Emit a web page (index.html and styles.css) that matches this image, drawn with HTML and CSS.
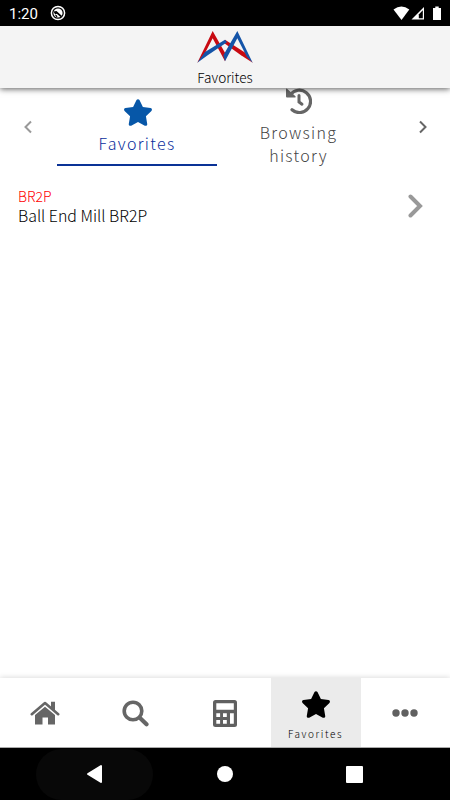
FILE: index.html
```html
<!DOCTYPE html>
<html lang="en">
<head>
<meta charset="utf-8">
<title>Favorites</title>
<link rel="stylesheet" href="styles.css">
</head>
<body>
<div class="status">
  <span class="time">1:20</span>
  <svg class="app-icon" viewBox="0 0 16 16"><circle cx="8" cy="8" r="6.6" fill="none" stroke="#fff" stroke-width="1.5"/><circle cx="8" cy="8" r="4.6" fill="#fff"/><path d="M3.500 6.500l3-.5 5.500 5-1.200 1.200-4-3.400-1.600.8z" fill="#000"/><path d="M4.800 10.500l1.700-.6 1 1.600-.8.800z" fill="#000"/></svg>
  <svg class="signals" viewBox="0 0 50 16"><path d="M.5 3.400Q8.500-2.400 16.300 3.400L8.500 14z" fill="#fff"/><path d="M31 1v12.500H18.500z" fill="#fff"/><path d="M29.800 4.200v8h-4V8.500z" fill="#000"/><path d="M40 2h2.300V.500h3.400V2H48v12h-8z" fill="#fff"/></svg>
</div>
<header class="header">
  <svg class="logo" viewBox="10 9 168 96">
    <path fill="#c80a12" d="M11 104L57 9l42 74-5 17L57 31 28 87z"/>
    <path fill="#c80a12" d="M94 35l61 39 22 30-35-22-50-36z"/>
    <path fill="#1454a8" d="M11 104l23-32 60-37 6 8-58 39z"/>
    <path fill="#1454a8" d="M94 100l-5-18 42-73 46 95-17-17-29-56z"/>
  </svg>
  <h1 class="title">Favorites</h1>
</header>
<nav class="tabs">
  <svg class="arrow dim" viewBox="0 0 10 14"><path d="M8 1.500L2.500 7 8 12.500"/></svg>
  <div class="tab active">
    <svg class="star" viewBox="0 0 576 512"><path d="M259.300 17.800L194 150.200 47.900 171.500c-26.200 3.800-36.700 36.100-17.700 54.600l105.700 103-25 145.500c-4.500 26.300 23.200 46 46.400 33.700L288 439.600l130.700 68.700c23.200 12.200 50.900-7.400 46.400-33.700l-25-145.500 105.700-103c19-18.500 8.500-50.800-17.700-54.600L382 150.200 316.700 17.800c-11.700-23.600-45.600-23.900-57.400 0z"/></svg>
    <span>Favorites</span>
  </div>
  <div class="tab">
    <svg class="history" viewBox="0 0 26 26"><path d="M4.500 6.500A11.200 11.200 0 1 1 6 21.800" fill="none" stroke="#666" stroke-width="3.200" stroke-linecap="round"/><path d="M0 1.200Q0 0 1 .700L9.500 8.200Q10 9.400 9 9.500H1Q0 9.500 0 8.500z" fill="#666"/><path d="M13 7.500v6.400l3 2.300" fill="none" stroke="#666" stroke-width="3" stroke-linecap="round"/></svg>
    <span>Browsing<br>history</span>
  </div>
  <svg class="arrow" viewBox="0 0 10 14"><path d="M2 1.500L7.500 7 2 12.500"/></svg>
</nav>
<main class="list">
  <div class="item">
    <div><div class="code">BR2P</div><div class="name">Ball End Mill BR2P</div></div>
    <svg class="go" viewBox="0 0 15 24"><path d="M2.500 2.500L12 12l-9.500 9.500"/></svg>
  </div>
</main>
<nav class="bottom">
  <div class="cell"><svg class="home" viewBox="0 0 30 24"><path d="M1.800 13.200L15 2l13.200 11.200" fill="none" stroke="#666" stroke-width="2.600" stroke-linecap="round" stroke-linejoin="round"/><path d="M21 .800h4v9l-4-3.400zM5 14L15 5.700 25 14v9.500h-7v-7h-5.500v7H5z" fill="#666"/></svg></div>
  <div class="cell"><svg class="search" viewBox="0 0 27 27"><circle cx="11" cy="11" r="8.800" fill="none" stroke="#666" stroke-width="3.600"/><path d="M18 18l6.500 6.200" stroke="#666" stroke-width="4.200" stroke-linecap="round"/></svg></div>
  <div class="cell"><svg class="calc" viewBox="0 0 24 27"><rect width="24" height="27" rx="2.500" fill="#606060"/><path d="M3.300 3.300h17.500v6.500H3.300zM3.300 13.300h3.800v3.800H3.300zM10 13.300h3.800v3.800H10zM3.300 20h3.800v3.800H3.300zM10 20h3.800v3.800H10zM17 13.300h3.800v10.500H17z" fill="#fff"/></svg></div>
  <div class="cell selected"><svg class="star" viewBox="0 0 576 512"><path d="M259.300 17.800L194 150.200 47.900 171.500c-26.200 3.800-36.700 36.100-17.700 54.600l105.700 103-25 145.500c-4.500 26.300 23.200 46 46.400 33.700L288 439.600l130.700 68.700c23.200 12.200 50.900-7.400 46.400-33.700l-25-145.500 105.700-103c19-18.500 8.500-50.800-17.700-54.600L382 150.200 316.700 17.800c-11.700-23.600-45.600-23.900-57.400 0z"/></svg><span>Favorites</span></div>
  <div class="cell"><svg class="more" viewBox="0 0 26 8"><circle cx="4" cy="4" r="3.700"/><circle cx="13" cy="4" r="3.700"/><circle cx="22" cy="4" r="3.700"/></svg></div>
</nav>
<footer class="system">
  <div class="pill"><svg class="back" viewBox="0 0 17 20"><path d="M15 2v16L2 10z" fill="#fff" stroke="#fff" stroke-width="2" stroke-linejoin="round"/></svg></div>
  <div class="circle"></div>
  <div class="square"></div>
</footer>
</body>
</html>
```
FILE: styles.css
```css
* { box-sizing: border-box; }
body {
  margin: 0; width: 450px; height: 800px; overflow: hidden;
  display: flex; flex-direction: column; background: #fff; color: #000;
  font-family: "Noto Sans CJK JP", "Noto Sans", sans-serif; font-weight: 300;
}
svg { display: block; flex: none; }
.status { height: 26px; flex: none; background: #000; color: #fff; display: flex; align-items: center; padding: 0 7px 0 9px; }
.time { font: 400 15px/26px Roboto, sans-serif; width: 41px; padding-top: 2px; }
.app-icon { width: 16px; height: 16px; }
.signals { width: 50px; height: 16px; margin-left: auto; margin-top: 1px; }
.header { height: 62px; flex: none; background: #f4f4f4; box-shadow: 0 1px 6px rgba(0,0,0,.65); display: flex; flex-direction: column; align-items: center; padding-top: 5px; position: relative; z-index: 1; }
.logo { width: 56px; height: 32px; }
.title { margin: 4px 0 0; font-size: 13.6px; line-height: 20px; font-weight: 300; }
.tabs { height: 78px; flex: none; display: grid; grid-template-columns: 57px 160px 163px 70px; }
.arrow { width: 10px; height: 14px; margin: 32px 0 0 23px; fill: none; stroke: #666; stroke-width: 2; }
.arrow.dim { stroke: #999; }
.tabs > .arrow:last-child { margin-left: 38px; }
.tab { display: flex; flex-direction: column; align-items: center; text-align: center; color: #444; font-size: 16px; line-height: 23px; letter-spacing: 1.3px; }
.tab.active { color: #0a2e9c; height: 78px; border-bottom: 2px solid #0a3296; }
.star { width: 30px; height: 27px; }
.active .star { fill: #0757a8; margin: 11px 0 6px 1px; }
.history { width: 26px; height: 26px; margin-bottom: 7px; }
.list { flex: 1; }
.item { display: flex; justify-content: space-between; padding: 21px 27px 0 18px; }
.code { color: #f00; font-size: 14px; line-height: 18px; }
.name { font-size: 15.9px; line-height: 21px; }
.go { width: 15px; height: 24px; margin-top: 7px; fill: none; stroke: #999; stroke-width: 4; stroke-linecap: round; }
.bottom { height: 70px; flex: none; display: grid; grid-template-columns: repeat(5, 1fr); box-shadow: 0 -1px 5px rgba(0,0,0,.13); border-bottom: 1px solid #aaa; }
.cell { display: flex; flex-direction: column; align-items: center; justify-content: center; padding-top: 1px; }
.selected { background: #ebebeb; margin: 0 -1px 0 1px; justify-content: flex-start; padding: 13px 1px 0 0; font-size: 10px; line-height: 16px; letter-spacing: 1.6px; }
.selected .star { margin-bottom: 8px; }
.home { width: 30px; height: 24px; }
.search { width: 27px; height: 27px; }
.calc { width: 24px; height: 27px; }
.more { width: 26px; height: 8px; fill: #606060; }
.system { height: 52px; flex: none; background: #000; display: flex; align-items: center; }
.pill { width: 117px; height: 51px; margin-left: 36px; border-radius: 26px; background: #080808; display: flex; align-items: center; justify-content: center; }
.back { width: 17px; height: 20px; }
.circle { width: 16px; height: 16px; margin-left: 64px; border-radius: 50%; background: #fff; }
.square { width: 17px; height: 17px; margin-left: 113px; border-radius: 1px; background: #fff; }
```
